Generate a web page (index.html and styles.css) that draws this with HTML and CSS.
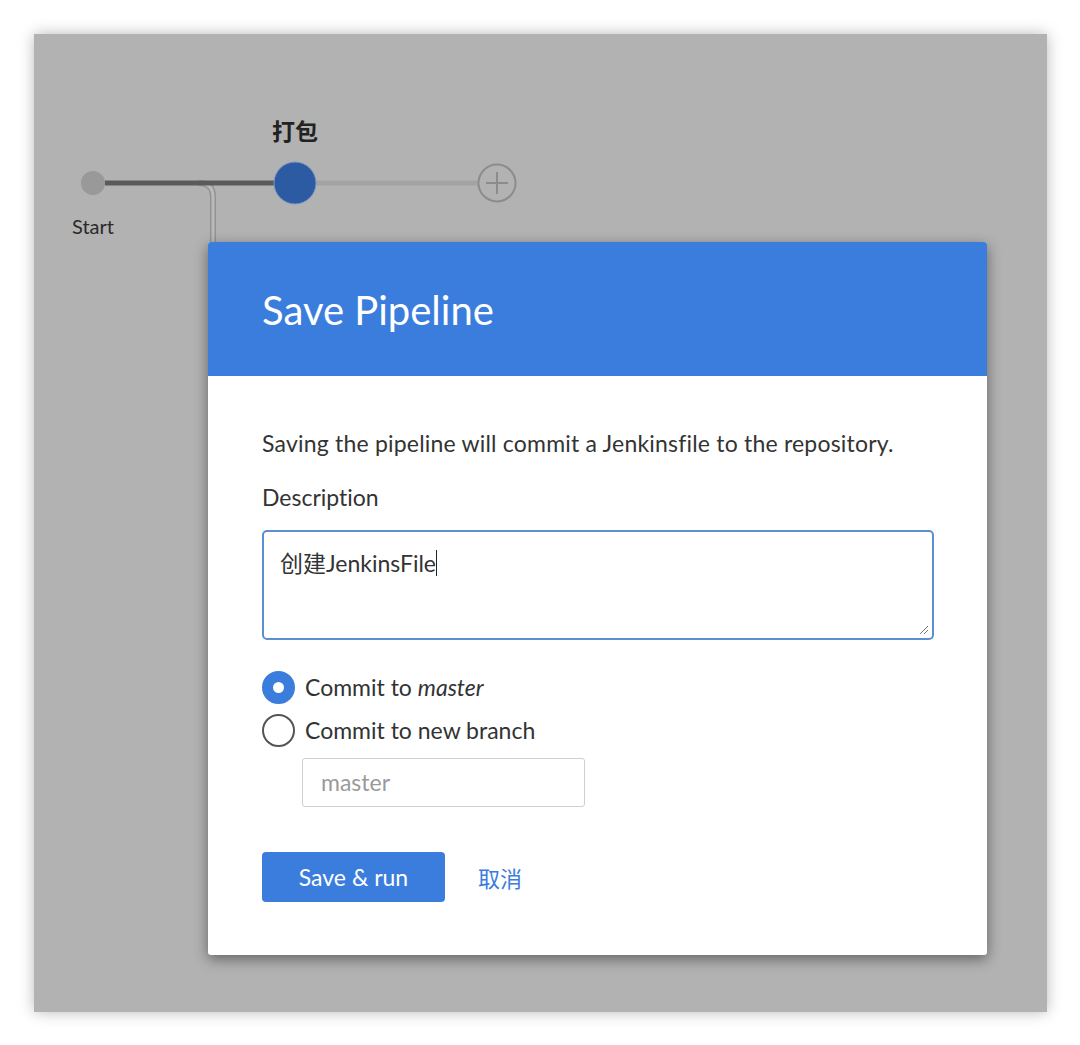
FILE: index.html
```html
<!DOCTYPE html>
<html>
<head>
<meta charset="utf-8">
<link rel="stylesheet" href="styles.css">
</head>
<body>
<div class="panel">
  <svg class="diagram" width="1013" height="208" viewBox="0 0 1013 208">
    <path d="M 165 149 Q 179 149 179 163 L 179 214" fill="none" stroke="#939393" stroke-width="6"/>
    <path d="M 165 149 Q 179 149 179 163 L 179 214" fill="none" stroke="#bababa" stroke-width="3"/>
    <line x1="282" y1="149" x2="444" y2="149" stroke="#a3a3a3" stroke-width="5"/>
    <line x1="71" y1="149" x2="241" y2="149" stroke="#5a5a5a" stroke-width="5"/>
    <circle cx="59" cy="149" r="12" fill="#999999"/>
    <circle cx="261" cy="149" r="21" fill="#2c5aa3" stroke="#7c95c4" stroke-width="1"/>
    <circle cx="463" cy="149" r="18.5" fill="none" stroke="#8c8c8c" stroke-width="2"/>
    <line x1="452" y1="149" x2="474" y2="149" stroke="#8c8c8c" stroke-width="2"/>
    <line x1="463" y1="138" x2="463" y2="160" stroke="#8c8c8c" stroke-width="2"/>
    <text class="stage-label" x="261" y="106" text-anchor="middle">打包</text>
    <text class="start-label" x="59" y="200" text-anchor="middle">Start</text>
  </svg>
  <div class="modal">
    <div class="modal-header">
      <h1 class="modal-title">Save Pipeline</h1>
    </div>
    <div class="modal-body">
      <p class="intro">Saving the pipeline will commit a Jenkinsfile to the repository.</p>
      <div class="label">Description</div>
      <div class="textarea">
        <span class="ta-text">创建JenkinsFile</span><span class="caret"></span>
        <svg class="grip" width="10" height="10" viewBox="0 0 10 10">
          <line x1="1" y1="9" x2="9" y2="1" stroke="#777" stroke-width="1"/>
          <line x1="5" y1="9" x2="9" y2="5" stroke="#777" stroke-width="1"/>
        </svg>
      </div>
      <div class="radios">
        <div class="radio-row">
          <span class="radio checked"></span>
          <span class="radio-label">Commit to <em>master</em></span>
        </div>
        <div class="radio-row">
          <span class="radio"></span>
          <span class="radio-label">Commit to new branch</span>
        </div>
        <div class="branch-input">master</div>
      </div>
      <div class="actions">
        <button class="btn-primary">Save &amp; run</button>
        <a class="btn-link">取消</a>
      </div>
    </div>
  </div>
</div>
</body>
</html>
```
FILE: styles.css
```css
* { box-sizing: border-box; }
html, body { margin: 0; padding: 0; background: #ffffff; }
body {
  padding: 34px 33px 33px 34px;
  font-family: Lato, "Noto Sans CJK SC", sans-serif;
  font-variant-ligatures: none;
  color: #333333;
}
.panel {
  width: 1013px;
  height: 978px;
  background: #b2b2b2;
  box-shadow: 0 0 14px rgba(0,0,0,0.28);
}
.diagram { display: block; }
.stage-label {
  font-family: "Noto Sans CJK SC", sans-serif;
  font-weight: 700;
  font-size: 23px;
  fill: #222222;
}
.start-label {
  font-family: Lato, sans-serif;
  font-size: 20px;
  fill: #2a2a2a;
}
.modal {
  position: relative;
  margin-left: 174px;
  width: 779px;
  height: 713px;
  background: #ffffff;
  border-radius: 3px;
  box-shadow: 0 4px 14px rgba(0,0,0,0.45);
  overflow: hidden;
}
.modal-header {
  height: 134px;
  background: #3b7ddd;
  padding: 44px 54px 0;
}
.modal-title {
  margin: 0;
  font-weight: 400;
  font-size: 40px;
  line-height: 48px;
  color: #ffffff;
}
.modal-body {
  padding: 52px 54px 0;
}
.intro {
  margin: 0;
  font-size: 23px;
  line-height: 30px;
  letter-spacing: 0.2px;
  color: #333;
}
.label {
  margin-top: 24px;
  font-size: 23px;
  line-height: 30px;
  color: #333;
}
.textarea {
  position: relative;
  margin-top: 18px;
  width: 672px;
  height: 110px;
  border: 2px solid #5b8fd0;
  border-radius: 5px;
  padding: 16px 16px;
  font-size: 23px;
  line-height: 30px;
  color: #333;
  display: flex;
  align-items: flex-start;
}
.ta-text { font-family: Lato, "Noto Sans CJK SC", sans-serif; }
.caret {
  display: inline-block;
  width: 1px;
  height: 26px;
  margin-top: 2px;
  background: #222;
}
.grip { position: absolute; right: 3px; bottom: 3px; }
.radios { margin-top: 31px; }
.radio-row {
  display: flex;
  align-items: center;
  gap: 10px;
  height: 32px;
  margin-bottom: 11px;
}
.radio-row + .radio-row { margin-bottom: 12px; }
.radio {
  width: 33px;
  height: 33px;
  border-radius: 50%;
  border: 2px solid #555;
  background: #fff;
  flex: none;
}
.radio.checked {
  border: 11px solid #3b7ddd;
  background: #fff;
}
.radio-label { font-size: 23px; color: #333; }
.radio-label em { font-style: italic; }
.branch-input {
  margin-left: 40px;
  width: 283px;
  height: 49px;
  border: 1px solid #cfcfcf;
  border-radius: 3px;
  padding: 0 18px;
  font-size: 23px;
  line-height: 47px;
  color: #9a9a9a;
}
.actions {
  margin-top: 45px;
  display: flex;
  align-items: center;
  gap: 33px;
}
.btn-primary {
  width: 183px;
  height: 50px;
  border: none;
  border-radius: 4px;
  background: #3b7ddd;
  color: #fff;
  font-family: Lato, sans-serif;
  font-size: 23px;
}
.btn-link {
  font-family: "Noto Sans CJK SC", sans-serif;
  font-size: 22px;
  color: #3b7ddd;
}
```
